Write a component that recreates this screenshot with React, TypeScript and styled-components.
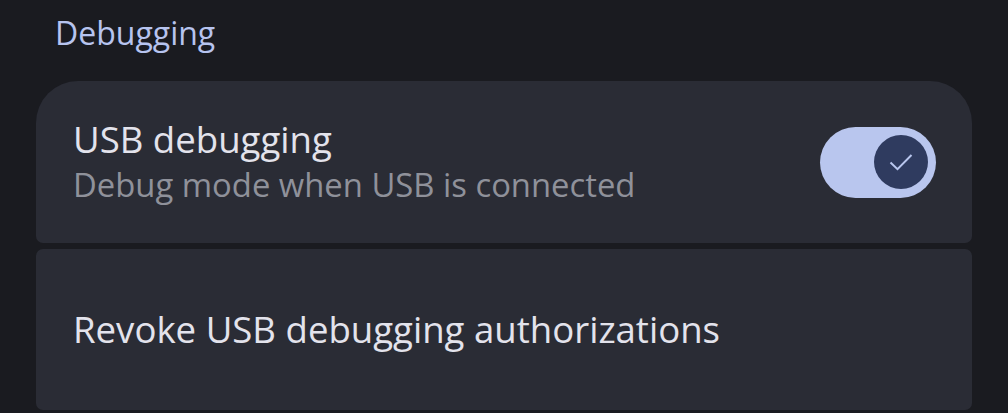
import React from 'react'
import styled, { createGlobalStyle } from 'styled-components'

const Global = createGlobalStyle`
  html, body {
    margin: 0;
    padding: 0;
    background: #1a1b20;
  }
  body {
    font-family: "Open Sans", Roboto, sans-serif;
    -webkit-font-smoothing: antialiased;
  }
`

const Page = styled.div`
  width: 1008px;
  height: 413px;
  overflow: hidden;
  background: #1a1b20;
  padding: 0 36px;
  box-sizing: border-box;
`

const Header = styled.div`
  height: 81px;
  padding-left: 19px;
  padding-top: 13px;
  box-sizing: border-box;
  font-size: 32px;
  line-height: 40px;
  color: #b7c4ef;
`

const Group = styled.div`
  display: flex;
  flex-direction: column;
  gap: 6px;
`

const Card = styled.div<{ $first?: boolean }>`
  display: flex;
  align-items: center;
  background: #2a2c35;
  border-radius: ${(p) => (p.$first ? '42px 42px 7px 7px' : '7px')};
  height: ${(p) => (p.$first ? '162px' : '161px')};
  padding: 0 36px 0 37px;
  box-sizing: border-box;
`

const Texts = styled.div`
  flex: 1;
  display: flex;
  flex-direction: column;
  padding-bottom: 1px;
`

const Title = styled.div`
  font-size: 36.6px;
  color: #e3e3ec;
  line-height: 46px;
`

const Subtitle = styled.div`
  font-size: 32.8px;
  color: #8f919a;
  line-height: 45px;
`

const Track = styled.div`
  width: 116px;
  height: 71px;
  border-radius: 36px;
  background: #b9c6ee;
  display: flex;
  align-items: center;
  justify-content: flex-end;
  padding-right: 8px;
  box-sizing: border-box;
`

const Thumb = styled.div`
  width: 54px;
  height: 54px;
  border-radius: 50%;
  background: #2f3b5f;
  display: flex;
  align-items: center;
  justify-content: center;
`

export default function App() {
  return (
    <Page>
      <Global />
      <Header>Debugging</Header>
      <Group>
        <Card $first>
          <Texts>
            <Title>USB debugging</Title>
            <Subtitle>Debug mode when USB is connected</Subtitle>
          </Texts>
          <Track>
            <Thumb>
              <svg width="24" height="18" viewBox="0 0 24 18">
                <path d="M1.5 9.5L8.5 16.2L22.5 2" fill="none" stroke="#b9c6ee" strokeWidth="2" />
              </svg>
            </Thumb>
          </Track>
        </Card>
        <Card>
          <Texts>
            <Title>Revoke USB debugging authorizations</Title>
          </Texts>
        </Card>
      </Group>
    </Page>
  )
}
